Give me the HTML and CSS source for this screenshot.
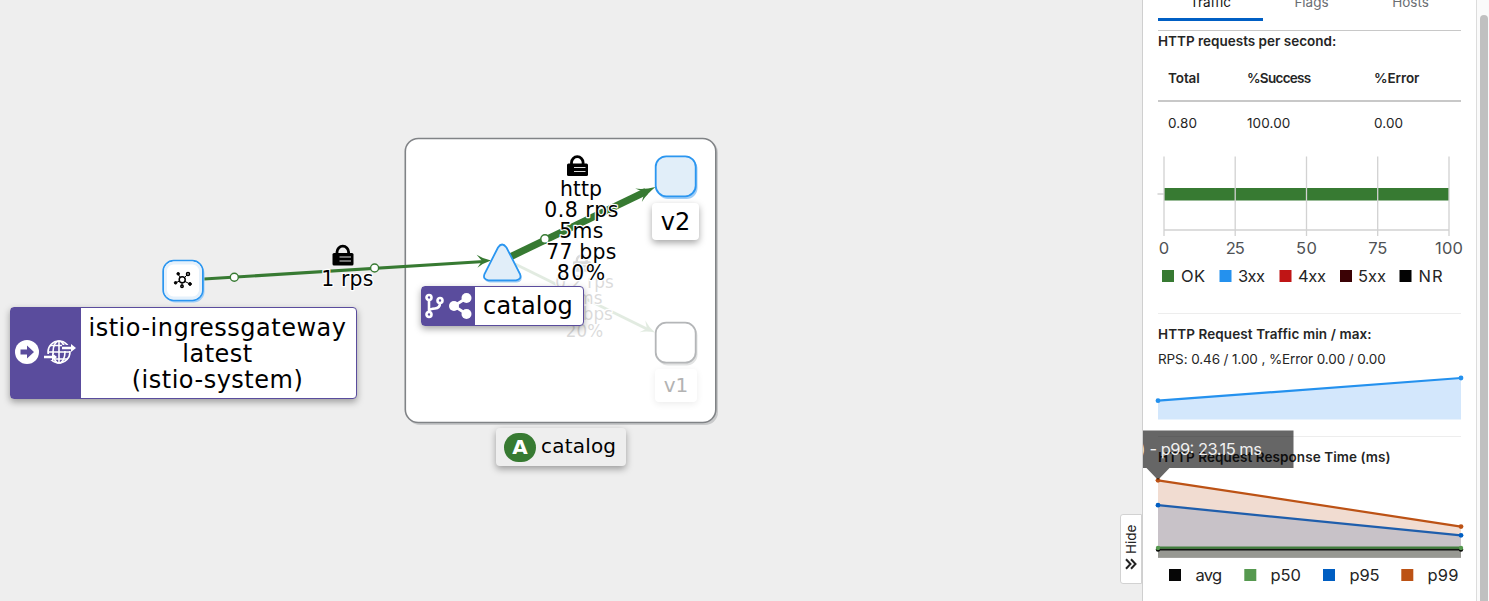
FILE: index.html
```html
<!DOCTYPE html>
<html lang="en">
<head>
  <meta charset="UTF-8">
  <meta name="viewport" content="width=device-width, initial-scale=1.0">
  <title>Graph</title>
  <link rel="stylesheet" href="styles.css">
</head>
<body>

  <div class="graph">
    <svg class="canvas" width="1142" height="601">
      <defs>
        <g id="lock">
          <path d="M4.500 10V7.500a5.800 5.800 0 0 1 11.600 0V10" fill="none" stroke="#000" stroke-width="2.800"/>
          <rect x="0" y="8.500" width="21" height="12.500" rx="1.500"/>
          <path d="M7 12.500h11.500M7 16.500h11.500" stroke="#ddd" stroke-width="1.100"/>
        </g>
        <path id="arrowhead" d="M0 0Q-8-2-14-6.500L-9 0l-5 6.500Q-8 2 0 0z"/>
      </defs>

      <!-- app box -->
      <rect class="box-shadow" x="407" y="140" width="311" height="285" rx="13"/>
      <rect class="box" x="405.300" y="138.500" width="310.500" height="284" rx="13"/>

      <!-- catalog to v1 -->
      <g class="faded">
        <path class="edge thin" d="M515 264L648 329.500"/>
        <use href="#arrowhead" class="arrow" transform="translate(655 332.500) rotate(26)"/>
        <use href="#lock" transform="translate(573 254) scale(.85)"/>
        <g class="edge-label small">
          <text x="584.500" y="287.500">0.2 rps</text>
          <text x="584.500" y="303.500">5ms</text>
          <text x="584.500" y="320">19 bps</text>
          <text x="584.500" y="337">20%</text>
        </g>
      </g>

      <!-- gateway to catalog -->
      <path class="edge" d="M204 279L484 261.500"/>
      <use href="#arrowhead" class="arrow" transform="translate(491 260.500) rotate(-3.500)"/>
      <circle class="dot" cx="234.300" cy="277.200" r="4"/>
      <circle class="dot" cx="374.600" cy="268" r="4"/>
      <use href="#lock" x="332.500" y="244.500"/>
      <g class="edge-label">
        <text x="347.300" y="285.500" textLength="52">1 rps</text>
      </g>

      <!-- catalog to v2 -->
      <path class="edge thick" d="M509 257.500L646 191.500"/>
      <use href="#arrowhead" class="arrow" transform="translate(655.500 187) rotate(-26) scale(1.350 1.150)"/>
      <circle class="dot" cx="545" cy="239" r="4.200"/>
      <use href="#lock" x="567" y="155"/>
      <g class="edge-label">
        <text x="581" y="195.500" textLength="42">http</text>
        <text x="581.300" y="217" textLength="74">0.8 rps</text>
        <text x="581.300" y="238" textLength="44">5ms</text>
        <text x="581.300" y="259" textLength="70">77 bps</text>
        <text x="581" y="279.500" textLength="48.500">80%</text>
      </g>

      <!-- gateway node -->
      <rect class="node-shadow" x="164.500" y="262.500" width="40" height="40" rx="11"/>
      <rect class="node white" x="163.200" y="260.700" width="39.600" height="39.600" rx="10.500"/>
      <rect class="node-inner" x="165.500" y="263" width="35" height="35" rx="8"/>
      <g class="mesh">
        <path d="M182 280l-4-6M182 280l6-6M182 280l-7 3M182 280l8 4M182 280v6"/>
        <circle class="hollow" cx="182.200" cy="279.700" r="3"/>
        <circle class="hollow" cx="188" cy="274" r="1.500"/>
        <circle class="hollow" cx="182" cy="286.300" r="1.200"/>
        <circle cx="178.200" cy="273.800" r="1.300"/>
        <circle cx="175.600" cy="282.800" r="1.300"/>
        <circle cx="190" cy="284" r="1.400"/>
      </g>

      <!-- service and workload nodes -->
      <path class="node-shadow" d="M498 248.500q5-5.500 9 0l14 26q2.500 7-4 8h-27q-7-1-4-8z"/>
      <path class="node" d="M498 247.500q4-6 8.500 0l13.500 26.500q2 5.500-4 6.300h-27.500q-6-1-4-6.300z"/>
      <rect class="node-shadow" x="657" y="158" width="40.500" height="41" rx="11"/>
      <rect class="node" x="655.700" y="156.300" width="40" height="40" rx="10.500"/>
      <rect class="gray-shadow" x="657" y="324.500" width="40.500" height="41" rx="11"/>
      <rect class="node gray" x="655.700" y="322.700" width="40" height="40" rx="10.500"/>
    </svg>

    <div class="label gateway">
      <div class="icons">
        <svg width="24" height="24" viewBox="0 0 24 24">
          <circle cx="12" cy="12" r="12" fill="#fff"/>
          <path d="M5.500 9.500H12V5.500L19 12l-7 6.500v-4H5.500z" fill="#5a4c9d"/>
        </svg>
        <svg width="32" height="24" viewBox="0 0 32 24" fill="none" stroke="#fff" stroke-width="1.600">
          <circle cx="15" cy="12" r="11"/>
          <ellipse cx="15" cy="12" rx="6" ry="11"/>
          <path d="M15 1v22M6 5.500h18M4 12h22M6 19h18"/>
          <path d="M18 8h12M0 17h10" stroke="#5a4c9d" stroke-width="6"/>
          <path d="M18 8h10M0 17h9" stroke-width="2.600"/>
          <path d="M27 4l5 4-5 4zM8 13l5 4-5 4z" fill="#fff" stroke="none"/>
        </svg>
      </div>
      <div class="text">istio-ingressgateway<br>latest<br>(istio-system)</div>
    </div>

    <div class="label service">
      <div class="icons">
        <svg width="19" height="26" viewBox="0 0 19 26" fill="none" stroke="#fff" stroke-width="2.600">
          <circle cx="4" cy="4.500" r="2.500"/>
          <circle cx="4" cy="21.500" r="2.500"/>
          <circle cx="15" cy="7.500" r="2.500"/>
          <path d="M4 7v12M15 10q0 5-5 5.500-5 .5-6 2"/>
        </svg>
        <svg width="23" height="26" viewBox="0 0 23 26" fill="#fff">
          <circle cx="5" cy="13" r="5"/>
          <circle cx="17.500" cy="5" r="5"/>
          <circle cx="17.500" cy="21" r="5"/>
          <path d="M17.500 5L5 13l12.500 8" fill="none" stroke="#fff" stroke-width="2.800"/>
        </svg>
      </div>
      <div class="text">catalog</div>
    </div>

    <div class="label version v2">v2</div>
    <div class="label version v1">v1</div>
    <div class="label app"><span class="badge">A</span><span class="name">catalog</span></div>

    <div class="hide-tab">
      <svg width="12" height="12" viewBox="0 0 12 12" fill="none" stroke="#222" stroke-width="2">
        <path d="M6 1.200L1.500 6 6 10.800M11 1.200L6.500 6l4.500 4.800"/>
      </svg>
      <span>Hide</span>
    </div>
  </div>

  <div class="side-panel">
    <div class="tabs">
      <div class="tab active"><span>Traffic</span></div>
      <div class="tab"><span>Flags</span></div>
      <div class="tab"><span>Hosts</span></div>
    </div>

    <div class="section requests">
      <h4>HTTP requests per second:</h4>
      <table>
        <thead>
          <tr><th>Total</th><th>%Success</th><th>%Error</th></tr>
        </thead>
        <tbody>
          <tr><td>0.80</td><td>100.00</td><td>0.00</td></tr>
        </tbody>
      </table>
      <svg class="chart" width="318" height="166">
        <rect x="6" y="44" width="285" height="12.500" fill="#377a32"/>
        <path class="grid" d="M6 12.500V92M77.200 12.500V92M148.500 12.500V92M219.700 12.500V92M291 12.500V92M6 86h285M-.5 50h6"/>
        <g class="axis">
          <text x="6" y="110">0</text>
          <text x="77.200" y="110" textLength="19">25</text>
          <text x="148.500" y="110" textLength="21">50</text>
          <text x="219.700" y="110" textLength="19">75</text>
          <text x="291" y="110" textLength="28">100</text>
        </g>
        <g class="legend">
          <rect x="4" y="126" width="12" height="12" fill="#377a32"/>
          <text x="23" y="138" textLength="24">OK</text>
          <rect x="61.500" y="126" width="12" height="12" fill="#2491ee"/>
          <text x="80" y="138" textLength="27">3xx</text>
          <rect x="121.500" y="126" width="12" height="12" fill="#c01515"/>
          <text x="140" y="138" textLength="28">4xx</text>
          <rect x="182" y="126" width="12" height="12" fill="#3b0205"/>
          <text x="200" y="138" textLength="28">5xx</text>
          <rect x="241.500" y="126" width="12" height="12" fill="#030303"/>
          <text x="260.500" y="138" textLength="24">NR</text>
        </g>
      </svg>
    </div>

    <div class="section traffic">
      <h4>HTTP Request Traffic min / max:</h4>
      <p>RPS: 0.46 / 1.00 , %Error 0.00 / 0.00</p>
      <svg class="chart" width="303" height="50">
        <path d="M0 31.700L303 9V50.500H0z" fill="#d3e7fc"/>
        <path d="M0 31.700L303 9" stroke="#2491ee" stroke-width="2.200"/>
        <circle cx="0" cy="31.700" r="2.400" fill="#2491ee"/>
        <circle cx="303" cy="9" r="2.400" fill="#2491ee"/>
      </svg>
    </div>

    <div class="section response">
      <h4>HTTP Request Response Time (ms)</h4>
      <svg class="chart" width="303" height="125">
        <path d="M0 10.500L303 56.500V65.500L0 35.500z" fill="#f1dcd1"/>
        <path d="M0 35.500L303 65.500V88H0z" fill="#c8c2c8"/>
        <path d="M0 77.500h303V87.800H0z" fill="#979892"/>
        <g fill="none" stroke-width="2.200">
          <path d="M0 79.500h303" stroke="#111"/>
          <path d="M0 77.700h303" stroke="#427f3e"/>
          <path d="M0 35.200L303 65.300" stroke="#1f5eac"/>
          <path d="M0 10.300L303 56.600" stroke="#bc5215"/>
        </g>
        <circle cx="0" cy="79.500" r="2.200"/>
        <circle cx="303" cy="79.500" r="2.200"/>
        <circle cx="0" cy="78" r="2.200" fill="#56994f"/>
        <circle cx="303" cy="78" r="2.200" fill="#56994f"/>
        <circle cx="0" cy="35.200" r="2.400" fill="#005ec2"/>
        <circle cx="303" cy="65.300" r="2.400" fill="#005ec2"/>
        <circle cx="0" cy="10.300" r="2.400" fill="#bc5215"/>
        <circle cx="303" cy="56.600" r="2.400" fill="#bc5215"/>
        <g class="legend">
          <rect x="11" y="99" width="12" height="12" fill="#060606"/>
          <text x="37.500" y="111" textLength="26.500">avg</text>
          <rect x="86.300" y="99" width="12" height="12" fill="#56994f"/>
          <text x="112.500" y="111" textLength="30.500">p50</text>
          <rect x="165" y="99" width="12" height="12" fill="#005ec2"/>
          <text x="191.500" y="111" textLength="30">p95</text>
          <rect x="243.300" y="99" width="12" height="12" fill="#bc5215"/>
          <text x="269.500" y="111" textLength="31">p99</text>
        </g>
      </svg>
      <div class="tooltip">
        <svg width="151" height="50">
          <path d="M0 .5h150.500V38H26.500L15 50 3.500 38H0z" fill="#000" fill-opacity=".6"/>
          <text x="-3.500" y="24.500">)</text>
          <text x="6.500" y="24.500" textLength="112.500">- p99: 23.15 ms</text>
        </svg>
      </div>
    </div>
  </div>

  <div class="scrollbar">
    <div class="thumb"></div>
  </div>

</body>
</html>
```
FILE: styles.css
```css
body {
  margin: 0;
  height: 601px;
  display: flex;
  overflow: hidden;
  background-color: #eee;
  color: #252525;
  font-family: Inter, "Open Sans", sans-serif;
  font-size: 14px;
}
svg {
  display: block;
}

/* graph */
.graph {
  position: relative;
  flex: 1;
  overflow: hidden;
  color: #000;
  font-family: "DejaVu Sans", Verdana, sans-serif;
}
.box {
  fill: #fff;
  stroke: #808386;
  stroke-width: 1.6;
}
.box-shadow {
  fill: #c9cacb;
}
.edge {
  fill: none;
  stroke: #377a32;
  stroke-width: 3;
}
.edge.thick {
  stroke-width: 7;
}
.arrow {
  fill: #377a32;
}
.dot {
  fill: #fff;
  stroke: #377a32;
  stroke-width: 1.4;
}
.edge-label {
  font-size: 20.4px;
  text-anchor: middle;
  paint-order: stroke;
  stroke: #fff;
  stroke-width: 2.4px;
  stroke-linejoin: round;
}
.edge-label.small {
  font-size: 16.8px;
}
.faded {
  opacity: 0.14;
}
.node {
  fill: #e1eef9;
  stroke: #2b96f0;
  stroke-width: 1.8;
}
.node.white {
  fill: #fff;
}
.node.gray {
  fill: #fff;
  stroke: #b4b6b8;
}
.node-shadow {
  fill: #9fcdf6;
}
.gray-shadow {
  fill: #e2e3e3;
}
.node-inner {
  fill: none;
  stroke: #e6f1fb;
  stroke-width: 3;
}
.mesh {
  stroke: #000;
  stroke-width: 1;
}
.mesh .hollow {
  fill: #fff;
  stroke-width: 1.5;
}
.label {
  position: absolute;
  box-sizing: border-box;
  display: flex;
  background-color: #fff;
  border-radius: 4px;
  font-size: 24px;
  box-shadow: 0 3px 7px rgba(0, 0, 0, 0.35);
}
.label .icons {
  display: flex;
  align-items: center;
  box-sizing: border-box;
  background-color: #5a4c9d;
}
.label .text {
  flex: 1;
  text-align: center;
}
.gateway {
  left: 10px;
  top: 307px;
  width: 347px;
  height: 92px;
  border: 1.5px solid #5a4c9d;
  line-height: 26px;
  letter-spacing: 0.5px;
}
.gateway .icons {
  width: 70px;
  gap: 5px;
  padding: 0 0 3px 4px;
}
.gateway .text {
  padding: 7px 2px 0 0;
}
.service {
  left: 421px;
  top: 286px;
  width: 163px;
  height: 40px;
  border: 1.5px solid #5a4c9d;
  line-height: 39px;
  letter-spacing: 0.2px;
}
.service .icons {
  width: 53px;
  gap: 5px;
  padding-left: 3px;
}
.service .text {
  padding-right: 2px;
}
.version {
  justify-content: center;
}
.v2 {
  left: 652px;
  top: 203px;
  width: 47px;
  height: 37px;
  line-height: 38px;
}
.v1 {
  left: 655px;
  top: 369px;
  width: 42px;
  height: 33px;
  line-height: 33px;
  font-size: 20px;
  color: #b3b3b3;
  box-shadow: 0 2px 7px rgba(0, 0, 0, 0.08);
}
.app {
  left: 496px;
  top: 428px;
  width: 130px;
  height: 38px;
  padding-left: 8px;
  align-items: center;
  gap: 5px;
  background-color: #eee;
  font-size: 20px;
}
.app .name {
  padding-bottom: 2px;
  letter-spacing: 0.2px;
}
.badge {
  width: 32px;
  height: 29px;
  line-height: 28px;
  border-radius: 15px;
  background-color: #377a32;
  color: #fff;
  font-weight: bold;
  text-align: center;
}
.hide-tab {
  position: absolute;
  right: 0;
  top: 514px;
  width: 22px;
  height: 70px;
  box-sizing: border-box;
  padding: 13px 0 0;
  display: flex;
  align-items: center;
  gap: 4px;
  writing-mode: vertical-rl;
  transform: rotate(180deg);
  background-color: #fff;
  border: 1px solid #d2d2d2;
  border-radius: 0 3px 3px 0;
  font-family: Inter, sans-serif;
  font-size: 13.5px;
  color: #252525;
}

/* side panel */
.side-panel {
  position: relative;
  width: 335px;
  height: 601px;
  box-sizing: border-box;
  padding: 0 15px 0 16px;
  overflow: hidden;
  background-color: #fff;
  border-right: 1px solid #dcdcdc;
  box-shadow: inset 1px 0 0 #cfcfcf;
}
.tabs {
  display: flex;
  width: 303px;
  height: 21px;
  padding-bottom: 9px;
  border-bottom: 1px solid #c8c8c8;
}
.tab {
  box-sizing: border-box;
  width: 105px;
  height: 21px;
  text-align: center;
  color: #6a6e73;
  font-size: 13.5px;
}
.tab span {
  display: block;
  margin-top: -6px;
  line-height: 17px;
}
.tab + .tab {
  width: 97px;
}
.tab:last-child {
  width: 101px;
}
.tab.active {
  color: #151515;
  border-bottom: 3px solid #005fc4;
}
.section {
  position: relative;
}
.chart {
  overflow: visible;
}
h4 {
  margin: 0;
  font-size: 13.5px;
  font-weight: 600;
  line-height: 21px;
  white-space: nowrap;
}
p {
  margin: 0;
  line-height: 21px;
  white-space: nowrap;
  font-size: 13.5px;
  letter-spacing: -0.1px;
}
.requests {
  height: 282px;
}
table {
  width: 303px;
  table-layout: fixed;
  border-collapse: collapse;
  text-align: left;
}
th, td {
  padding: 0 0 0 10px;
  font-size: 13.5px;
}
th {
  height: 45px;
  padding-top: 3px;
  font-weight: 600;
  letter-spacing: -0.1px;
  border-bottom: 2px solid #c8c8c8;
}
th:nth-child(2) {
  width: 117px;
  letter-spacing: -0.7px;
}
td {
  height: 42px;
  letter-spacing: 0.1px;
}
th:first-child {
  width: 69px;
}
.grid {
  fill: none;
  stroke: #d2d2d2;
  stroke-width: 1.3;
}
.axis, .legend {
  font-size: 16.5px;
  fill: #252525;
}
.axis {
  text-anchor: middle;
  fill: #4f5255;
}
.traffic {
  height: 122px;
  border-top: 1px solid #ededed;
}
.traffic h4 {
  padding-top: 10px;
  letter-spacing: 0.1px;
}
.traffic p {
  padding-top: 4px;
}
.traffic .chart {
  margin-top: -1px;
}
.response {
  border-top: 1px solid #ededed;
}
.response h4 {
  padding-top: 10px;
  letter-spacing: 0.07px;
}
.response .chart {
  margin-top: 2px;
}
.tooltip {
  position: absolute;
  left: -15px;
  top: -7px;
}
.tooltip text {
  fill: #f0f0f0;
  font-size: 16.5px;
}
.scrollbar {
  width: 12px;
  padding-top: 15px;
  box-sizing: border-box;
  background-color: #fafafa;
}
.thumb {
  width: 8px;
  height: 586px;
  margin-left: 3px;
  border-radius: 4px 4px 0 0;
  background-color: #c0c0c0;
}
```
